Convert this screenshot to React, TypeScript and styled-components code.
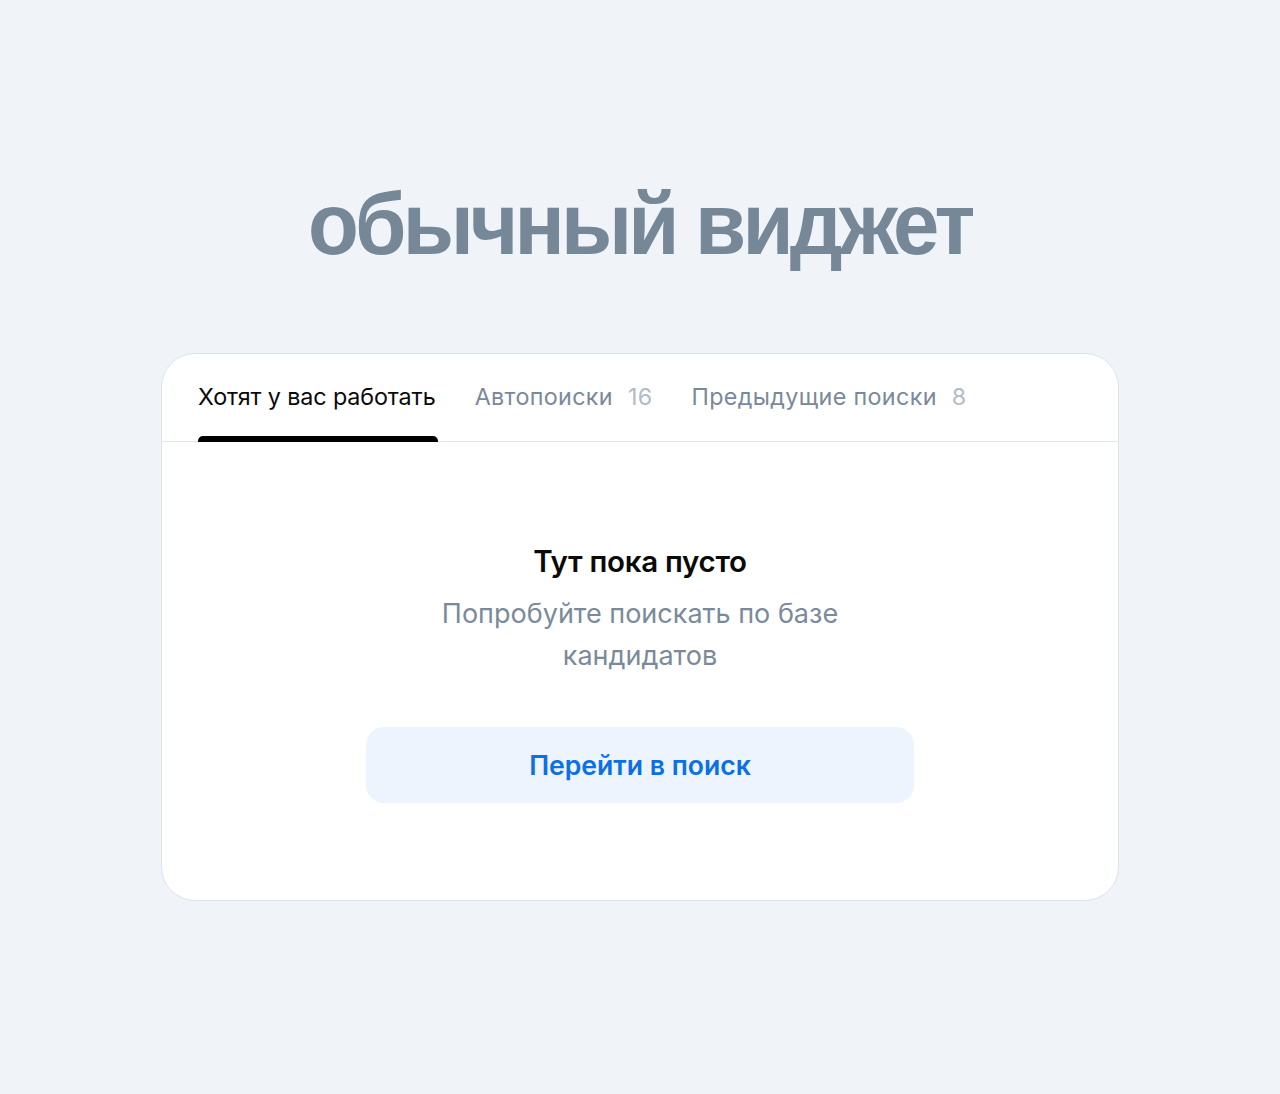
import React from 'react';
import styled, { createGlobalStyle } from 'styled-components';

const GlobalStyle = createGlobalStyle`
  html, body {
    margin: 0;
    padding: 0;
    background: #f0f4f9;
  }
  body {
    font-family: Inter, 'Noto Sans', sans-serif;
  }
`;

interface Tab {
  title: string;
  count?: number;
}

const tabs: Tab[] = [
  { title: 'Хотят у вас работать' },
  { title: 'Автопоиски', count: 16 },
  { title: 'Предыдущие поиски', count: 8 },
];

const App: React.FC = () => {
  const activeIndex = 0;

  return (
    <>
      <GlobalStyle />
      <Page>
        <Heading>обычный виджет</Heading>
        <Card>
          <TabBar>
            {tabs.map((tab, i) => (
              <TabItem key={tab.title} $active={i === activeIndex}>
                <span>{tab.title}</span>
                {tab.count !== undefined && <Count>{tab.count}</Count>}
              </TabItem>
            ))}
          </TabBar>
          <Body>
            <EmptyTitle>Тут пока пусто</EmptyTitle>
            <EmptyText>Попробуйте поискать по базе кандидатов</EmptyText>
            <SearchButton type="button">Перейти в поиск</SearchButton>
          </Body>
        </Card>
      </Page>
    </>
  );
};

const Page = styled.div`
  width: 1280px;
  height: 1094px;
  box-sizing: border-box;
  display: flex;
  flex-direction: column;
  align-items: center;
  padding-top: 174px;
`;

const Heading = styled.h1`
  margin: 0;
  height: 102px;
  font-family: 'Liberation Sans', Arial, sans-serif;
  font-weight: 700;
  font-size: 88px;
  line-height: 100px;
  letter-spacing: -4px;
  color: #768797;
  transform: scaleX(0.946);
`;

const Card = styled.div`
  margin-top: 77px;
  width: 958px;
  height: 548px;
  box-sizing: border-box;
  background: #fff;
  border: 1px solid #dce2ea;
  border-radius: 34px;
  display: flex;
  flex-direction: column;
  overflow: hidden;
`;

const TabBar = styled.div`
  display: flex;
  gap: 39px;
  padding: 0 36px;
  height: 87px;
  border-bottom: 1px solid #dfe4eb;
  flex-shrink: 0;
`;

const TabItem = styled.div<{ $active: boolean }>`
  position: relative;
  display: flex;
  align-items: center;
  gap: 15px;
  padding-bottom: 3px;
  font-size: 23.3px;
  letter-spacing: ${(p) => (p.$active ? '-0.1px' : '0.35px')};
  color: ${(p) => (p.$active ? '#0a0a0a' : '#7a8999')};
  &::after {
    content: '';
    display: ${(p) => (p.$active ? 'block' : 'none')};
    position: absolute;
    left: 0;
    right: -2px;
    bottom: -1px;
    height: 6px;
    background: #000;
    border-radius: 5px 5px 0 0;
  }
`;

const Count = styled.span`
  color: #b1bcc8;
`;

const Body = styled.div`
  flex: 1;
  display: flex;
  flex-direction: column;
  align-items: center;
  padding-top: 99px;
`;

const EmptyTitle = styled.div`
  font-size: 29.5px;
  font-weight: 600;
  line-height: 40px;
  color: #0a0a0a;
  letter-spacing: -0.3px;
`;

const EmptyText = styled.div`
  margin-top: 12px;
  width: 430px;
  text-align: center;
  font-size: 27px;
  line-height: 42px;
  color: #7b8a99;
`;

const SearchButton = styled.button`
  margin-top: 50px;
  width: 548px;
  height: 76px;
  border: none;
  border-radius: 18px;
  background: #edf4fd;
  color: #0b6fe6;
  font-family: Inter, 'Noto Sans', sans-serif;
  font-size: 26.6px;
  font-weight: 600;
  cursor: pointer;
`;

export default App;
